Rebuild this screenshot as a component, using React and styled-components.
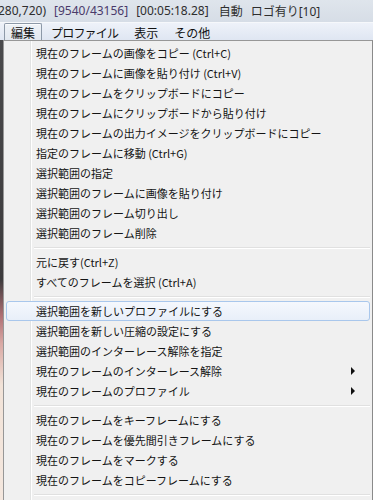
import React from "react";
import styled, { createGlobalStyle } from "styled-components";

const Global = createGlobalStyle`
  *, *::before, *::after { box-sizing: border-box; }
  html, body { margin: 0; padding: 0; background: #f0f0f0; }
  body { font-family: "Noto Sans CJK JP", "Noto Sans", sans-serif; overflow: hidden; }
`;

const Page = styled.div`
  width: 373px;
  height: 500px;
  display: flex;
  flex-direction: column;
  overflow: hidden;
`;

const TitleBar = styled.div`
  height: 22px;
  flex: none;
  display: flex;
  align-items: center;
  padding-bottom: 1px;
  background: linear-gradient(#dfe5ec, #d6dde6);
  font-family: "Noto Sans", "Noto Sans CJK JP", sans-serif;
  font-size: 12px;
  white-space: nowrap;
  overflow: hidden;
`;

const TitleText = styled.span`
  flex: none;
  margin-left: ${(p) => p.$ml || 0}px;
  color: ${(p) => p.$c || "#2e2e2e"};
`;

const MenuBar = styled.div`
  height: 18px;
  flex: none;
  display: flex;
  align-items: stretch;
  padding-left: 4px;
  gap: 2px;
  border-top: 1px solid #f6f8fb;
  background: linear-gradient(#eef2f9, #dfe6f2);
  font-size: 12px;
  color: #111;
`;

const BarItem = styled.div`
  display: flex;
  align-items: center;
  padding: 0 ${(p) => p.$pad || 6}px;
  border: 1px solid ${(p) => (p.$open ? "#8d99a8" : "transparent")};
  border-bottom: none;
  border-radius: 2px 2px 0 0;
  background: ${(p) => (p.$open ? "linear-gradient(#eef2f7, #e2e8f0)" : "transparent")};
  box-shadow: ${(p) => (p.$open ? "inset 0 1px 0 #fafcfe" : "none")};
  letter-spacing: ${(p) => p.$ls || 0}px;
`;

const Body = styled.div`
  flex: 1;
  display: flex;
  min-height: 0;
`;

const Strip = styled.div`
  width: 3px;
  flex: none;
  background: linear-gradient(#4a4a4c 0%, #3c3b3d 52%, #b07074 60%, #d9a9a4 66%, #f2e3d8 75%, #f4e7de 100%);
`;

const Menu = styled.div`
  flex: 1;
  position: relative;
  border: 1px solid #979797;
  border-right-color: #8a8a8a;
  border-bottom: none;
  background: #f0f0f0;
  padding: 2px 2px 0 2px;
  display: flex;
  flex-direction: column;
  &::before {
    content: "";
    position: absolute;
    top: 0;
    bottom: 0;
    left: 26px;
    width: 1px;
    background: #e2e3e3;
    box-shadow: 1px 0 0 #ffffff;
  }
`;

const Item = styled.div`
  position: relative;
  z-index: 1;
  height: 20px;
  flex: none;
  display: flex;
  align-items: center;
  padding-left: 29px;
  padding-right: 12px;
  font-size: 11px;
  color: #141414;
  white-space: nowrap;
  border: 1px solid ${(p) => (p.$hover ? "#a9c7ec" : "transparent")};
  border-radius: 3px;
  background: ${(p) => (p.$hover ? "linear-gradient(#f5f8fd, #e8eff9)" : "transparent")};
`;

const Label = styled.span`
  flex: 1;
`;

const Arrow = styled.span`
  width: 0;
  height: 0;
  border-top: 4px solid transparent;
  border-bottom: 4px solid transparent;
  border-left: 4px solid #111;
  margin-right: 2px;
`;

const Sep = styled.div`
  position: relative;
  z-index: 1;
  flex: none;
  height: 9px;
  margin-left: 28px;
  display: flex;
  align-items: center;
  &::after {
    content: "";
    display: block;
    width: 100%;
    height: 1px;
    background: #e0e0e0;
    box-shadow: 0 1px 0 #ffffff;
  }
`;

const groups = [
  [
    "現在のフレームの画像をコピー (Ctrl+C)",
    "現在のフレームに画像を貼り付け (Ctrl+V)",
    "現在のフレームをクリップボードにコピー",
    "現在のフレームにクリップボードから貼り付け",
    "現在のフレームの出力イメージをクリップボードにコピー",
    "指定のフレームに移動 (Ctrl+G)",
    "選択範囲の指定",
    "選択範囲のフレームに画像を貼り付け",
    "選択範囲のフレーム切り出し",
    "選択範囲のフレーム削除",
  ],
  ["元に戻す(Ctrl+Z)", "すべてのフレームを選択 (Ctrl+A)"],
  [
    { t: "選択範囲を新しいプロファイルにする", hover: true },
    "選択範囲を新しい圧縮の設定にする",
    "選択範囲のインターレース解除を指定",
    { t: "現在のフレームのインターレース解除", sub: true },
    { t: "現在のフレームのプロファイル", sub: true },
  ],
  [
    "現在のフレームをキーフレームにする",
    "現在のフレームを優先間引きフレームにする",
    "現在のフレームをマークする",
    "現在のフレームをコピーフレームにする",
  ],
];

export default function App() {
  return (
    <Page>
      <Global />
      <TitleBar>
        <TitleText $ml={-2}>280,720)</TitleText>
        <TitleText $ml={8} $c="#4a3a6a">[9540/43156]</TitleText>
        <TitleText $ml={8}>[00:05:18.28]</TitleText>
        <TitleText $ml={10}>自動</TitleText>
        <TitleText $ml={8}>ロゴ有り[10]</TitleText>
      </TitleBar>
      <MenuBar>
        <BarItem $open>編集</BarItem>
        <BarItem $ls={-0.8}>プロファイル</BarItem>
        <BarItem>表示</BarItem>
        <BarItem>その他</BarItem>
      </MenuBar>
      <Body>
        <Strip />
        <Menu>
          {groups.map((g, gi) => (
            <React.Fragment key={gi}>
              {g.map((it, i) => {
                const o = typeof it === "string" ? { t: it } : it;
                return (
                  <Item key={i} $hover={o.hover}>
                    <Label>{o.t}</Label>
                    {o.sub && <Arrow />}
                  </Item>
                );
              })}
              <Sep />
            </React.Fragment>
          ))}
          <Item>現在のフレームを通常のフレームにする</Item>
        </Menu>
      </Body>
    </Page>
  );
}
